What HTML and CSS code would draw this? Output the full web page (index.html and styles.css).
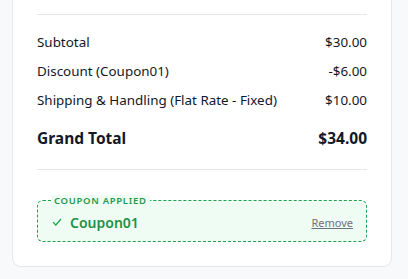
FILE: index.html
```html
<!DOCTYPE html>
<html>
<head>
<meta charset="utf-8">
<link rel="stylesheet" href="styles.css">
</head>
<body>
<div class="card">
  <hr class="divider">
  <div class="rows">
    <div class="row"><span>Subtotal</span><span>$30.00</span></div>
    <div class="row"><span>Discount (Coupon01)</span><span>-$6.00</span></div>
    <div class="row"><span>Shipping &amp; Handling (Flat Rate - Fixed)</span><span>$10.00</span></div>
  </div>
  <div class="row total"><span>Grand Total</span><span>$34.00</span></div>
  <hr class="divider">
  <fieldset class="coupon">
    <legend>COUPON APPLIED</legend>
    <div class="coupon-row">
      <span class="code"><svg class="check" width="10" height="8" viewBox="0 0 10 8"><path d="M1 4.2 L3.8 7 L9 1" fill="none" stroke="#16a34a" stroke-width="1.2"/></svg>Coupon01</span>
      <a class="remove" href="#">Remove</a>
    </div>
  </fieldset>
</div>
</body>
</html>
```
FILE: styles.css
```css
html, body { margin: 0; padding: 0; }
body {
  background: #f8f9fb;
  font-family: "Noto Sans", "Open Sans", sans-serif;
  color: #111827;
}
.card {
  margin-left: 12px;
  width: 380px;
  box-sizing: border-box;
  background: #fff;
  border: 1px solid #e5e7eb;
  border-top: 0;
  border-radius: 0 0 9px 9px;
  padding: 14px 24px 24px;
}
.divider {
  border: 0;
  border-top: 1px solid #e5e7eb;
  margin: 0;
}
.rows { padding-top: 12px; }
.row {
  display: flex;
  justify-content: space-between;
  font-size: 13.4px;
  height: 29px;
  align-items: center;
}
.total {
  font-size: 15.5px;
  font-weight: 700;
  height: 30px;
  margin-top: 9px;
  margin-bottom: 16px;
}
.coupon {
  margin: 25px 0 0;
  padding: 3px 13px 0 14px;
  border: 1px dashed #22a052;
  border-radius: 6px;
  background: #effcf3;
  height: 47px;
  box-sizing: border-box;
}
.coupon legend {
  font-size: 9.5px;
  font-weight: 600;
  letter-spacing: 0.7px;
  color: #1f9a4c;
  padding: 0 3px;
  margin-left: -1px;
  background: #effcf3;
  line-height: 11px;
}
.coupon-row {
  display: flex;
  justify-content: space-between;
  align-items: center;
  height: 26px;
}
.code {
  display: flex;
  align-items: center;
  gap: 8px;
  font-size: 14px;
  font-weight: 600;
  color: #1e9148;
}
.remove {
  font-size: 11px;
  color: #6b7280;
  text-decoration: underline;
}
```
